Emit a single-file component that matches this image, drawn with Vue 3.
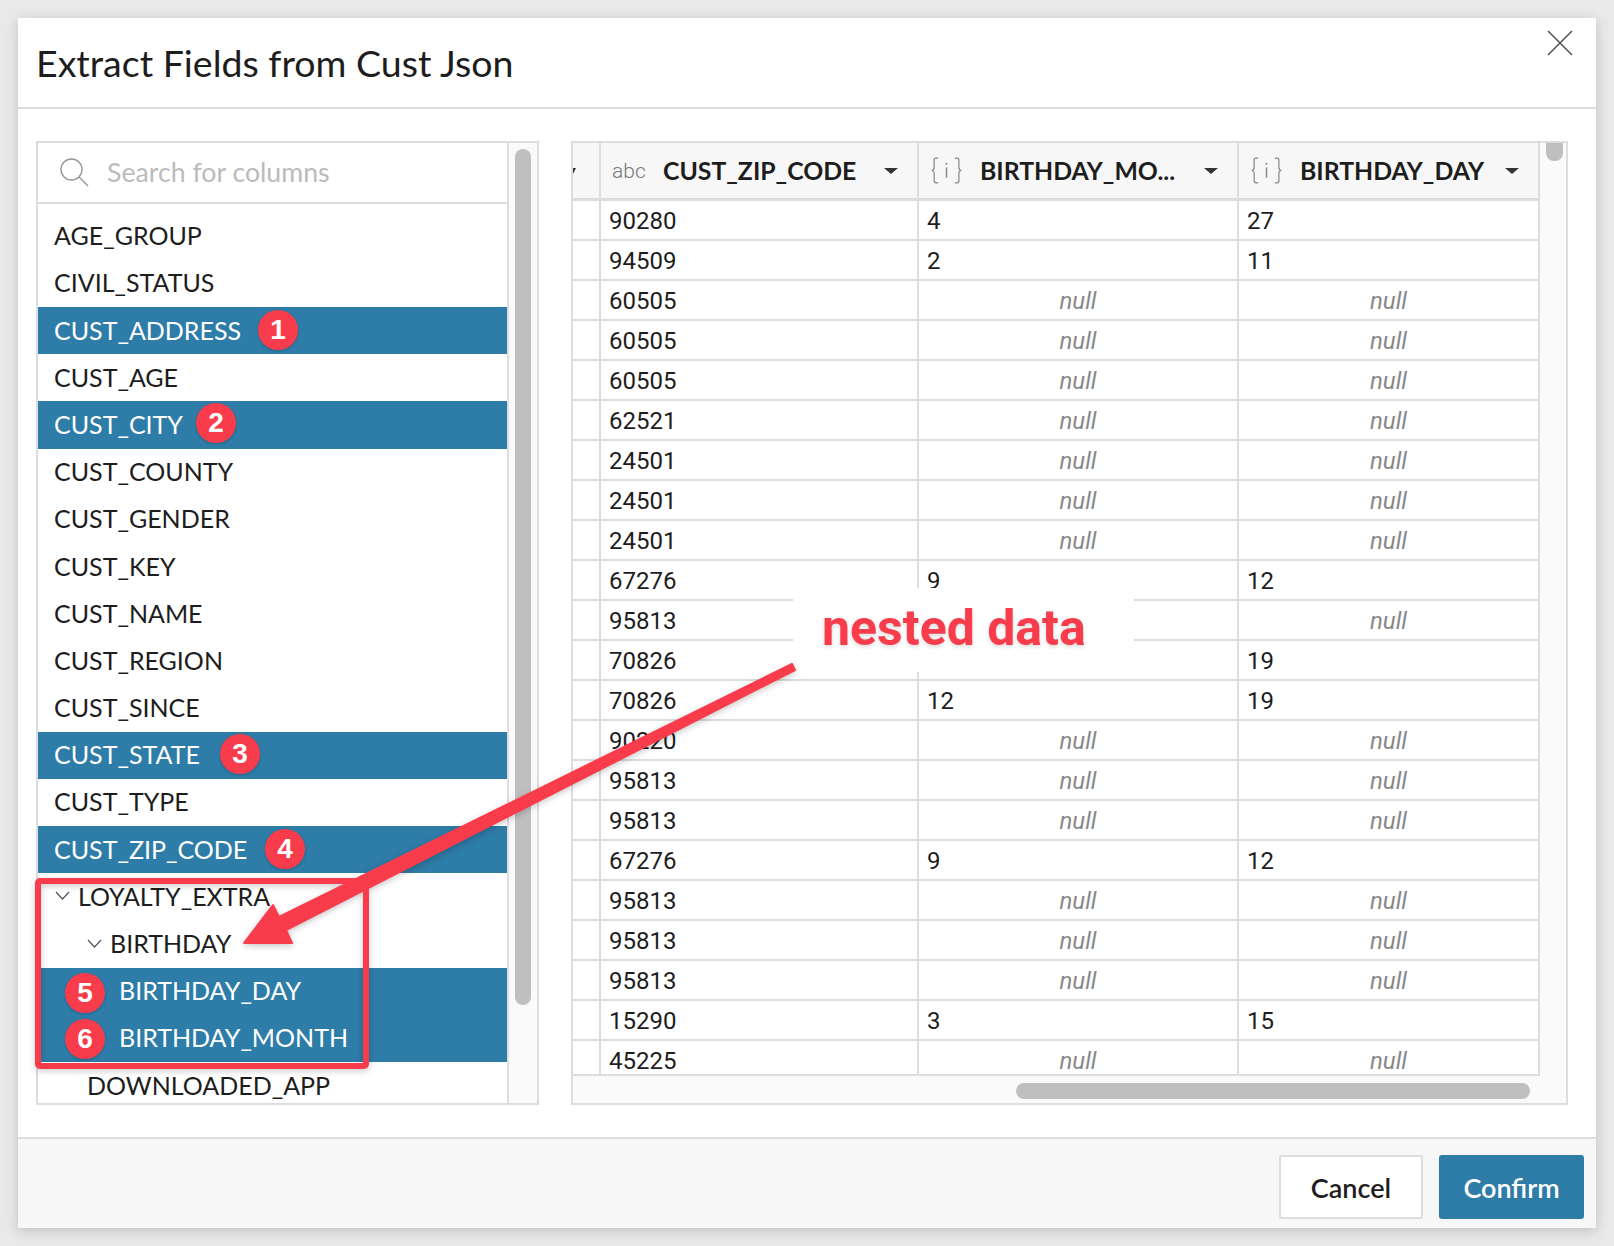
<template>
  <div class="page">
    <section class="dialog">
      <header class="head">
        <h1>Extract Fields from Cust Json</h1>
        <button type="button" class="close" aria-label="Close">
          <svg width="26" height="26" viewBox="0 0 26 26"><path d="M1 1 L25 25 M25 1 L1 25" stroke="#555" stroke-width="1.6" fill="none" /></svg>
        </button>
      </header>

      <div class="body">
        <div class="picker">
          <div class="picker-main">
            <div class="search">
              <svg width="30" height="30" viewBox="0 0 30 30"><circle cx="12.5" cy="12.5" r="10.5" stroke="#999" stroke-width="1.4" fill="none" /><path d="M20 20 L29 29" stroke="#999" stroke-width="1.4" /></svg>
              <span>Search for columns</span>
            </div>
            <ul class="cols">
              <li v-for="c in columns" :key="c.name" :class="['col', 'lvl' + c.level, { sel: c.sel }]">
                <svg v-if="c.open" class="chev" width="15" height="9" viewBox="0 0 15 9"><path d="M1 1 L7.5 8 L14 1" stroke="#555" stroke-width="1.2" fill="none" /></svg>
                {{ c.name }}
              </li>
            </ul>
          </div>
          <div class="vtrack"><div class="vthumb"></div></div>
        </div>

        <div class="preview">
          <div class="preview-top">
            <div class="table">
              <div class="tr th">
                <div class="td stub"><i class="caret small"></i></div>
                <div v-for="h in headers" :key="h.name" class="td">
                  <span v-if="h.type === 'abc'" class="abc">abc</span>
                  <svg v-else class="braces" width="33" height="27" viewBox="0 0 32 26">
                    <path d="M8 1 H6 Q4 1 4 3 V10 Q4 13 1.5 13 Q4 13 4 16 V23 Q4 25 6 25 H8 M24 1 H26 Q28 1 28 3 V10 Q28 13 30.5 13 Q28 13 28 16 V23 Q28 25 26 25 H24" stroke="#888" stroke-width="1.2" fill="none" />
                    <path d="M16 10 V20" stroke="#888" stroke-width="1.4" />
                    <circle cx="16" cy="6.5" r="1" fill="#888" />
                  </svg>
                  <b>{{ h.name }}</b>
                  <i class="caret"></i>
                </div>
              </div>
              <div class="rows">
                <div v-for="(r, i) in rows" :key="i" class="tr">
                  <div class="td stub"></div>
                  <div class="td">{{ r[0] }}</div>
                  <div :class="['td', { nul: r[1] === null }]">{{ r[1] === null ? 'null' : r[1] }}</div>
                  <div :class="['td', { nul: r[2] === null }]">{{ r[2] === null ? 'null' : r[2] }}</div>
                </div>
              </div>
            </div>
            <div class="vtrack narrow"><div class="vthumb short"></div></div>
          </div>
          <div class="htrack"><div class="hthumb"></div></div>
        </div>
      </div>

      <footer class="foot">
        <button type="button" class="btn">Cancel</button>
        <button type="button" class="btn primary">Confirm</button>
      </footer>
    </section>

    <!-- screenshot annotations -->
    <div class="callout">nested data</div>
    <svg class="marks" width="1614" height="1246" viewBox="0 0 1614 1246">
      <rect x="38" y="881" width="328" height="185" rx="2" fill="none" stroke="#f93c4b" stroke-width="6" />
      <path d="M792 664 L795 670 L286 930 L292 943 L244 943 L273 905 L279 917 Z" fill="#f93c4b" stroke="#f93c4b" stroke-width="2" stroke-linejoin="round" />
    </svg>
    <span v-for="b in badges" :key="b.n" class="badge" :style="{ left: b.x + 'px', top: b.y + 'px' }">{{ b.n }}</span>
  </div>
</template>

<script setup>
const names = [
  ['AGE_GROUP'], ['CIVIL_STATUS'], ['CUST_ADDRESS', 1], ['CUST_AGE'], ['CUST_CITY', 1], ['CUST_COUNTY'],
  ['CUST_GENDER'], ['CUST_KEY'], ['CUST_NAME'], ['CUST_REGION'], ['CUST_SINCE'], ['CUST_STATE', 1],
  ['CUST_TYPE'], ['CUST_ZIP_CODE', 1],
]
const columns = [
  ...names.map(([name, sel]) => ({ name, sel: !!sel, level: 0 })),
  { name: 'LOYALTY_EXTRA', level: 1, open: true },
  { name: 'BIRTHDAY', level: 2, open: true },
  { name: 'BIRTHDAY_DAY', level: 3, sel: true },
  { name: 'BIRTHDAY_MONTH', level: 3, sel: true },
  { name: 'DOWNLOADED_APP', level: 4 },
]

const headers = [
  { type: 'abc', name: 'CUST_ZIP_CODE' },
  { type: 'json', name: 'BIRTHDAY_MO...' },
  { type: 'json', name: 'BIRTHDAY_DAY' },
]

// cells under the callout box are left empty
const rows = [
  ['90280', 4, 27], ['94509', 2, 11], ['60505', null, null], ['60505', null, null], ['60505', null, null],
  ['62521', null, null], ['24501', null, null], ['24501', null, null], ['24501', null, null], ['67276', 9, 12],
  ['95813', '', null], ['70826', '', 19], ['70826', 12, 19], ['90220', null, null], ['95813', null, null],
  ['95813', null, null], ['67276', 9, 12], ['95813', null, null], ['95813', null, null], ['95813', null, null],
  ['15290', 3, 15], ['45225', null, null],
]

const badges = [
  { n: 1, x: 278, y: 330 },
  { n: 2, x: 216, y: 423 },
  { n: 3, x: 240, y: 754 },
  { n: 4, x: 285, y: 849 },
  { n: 5, x: 85, y: 993 },
  { n: 6, x: 85, y: 1039 },
]
</script>

<style>
body {
  background: #e9e9e9;
}
</style>

<style scoped>
.page {
  position: relative;
  width: 1614px;
  height: 1246px;
  padding: 18px 18px 0;
  box-sizing: border-box;
  overflow: hidden;
  font-family: "Lato", "Noto Sans", sans-serif;
  color: #1d1d1d;
}

.dialog {
  width: 1578px;
  height: 1210px;
  background: white;
  box-shadow: 0 3px 12px rgba(0, 0, 0, 0.18);
  display: flex;
  flex-direction: column;
}

.head {
  height: 91px;
  flex: none;
  box-sizing: border-box;
  border-bottom: 2px solid #ddd;
  display: flex;
  justify-content: space-between;
  padding: 0 23px 0 18px;
}

h1 {
  margin: 0;
  font-size: 37.5px;
  font-weight: 400;
  line-height: 90px;
}

.close {
  border: 0;
  background: none;
  padding: 0;
  height: 26px;
  margin-top: 12px;
}

.body {
  flex: 1;
  min-height: 0;
  box-sizing: border-box;
  padding: 32px 28px 32px 18px;
  display: flex;
  gap: 32px;
}

.picker {
  width: 503px;
  flex: none;
  box-sizing: border-box;
  border: 2px solid #ddd;
  display: flex;
  overflow: hidden;
}

.picker-main {
  flex: 1;
  min-width: 0;
  overflow: hidden;
}

.search {
  height: 61px;
  box-sizing: border-box;
  border-bottom: 2px solid #ddd;
  display: flex;
  align-items: center;
  gap: 18px;
  padding: 0 0 1px 21px;
  font-size: 26.7px;
  color: #bbb;
}

.cols {
  list-style: none;
  margin: 0;
  padding: 8.6px 0 0;
}

.col {
  height: 47.2px;
  box-sizing: border-box;
  display: flex;
  align-items: center;
  padding-left: 16px;
  padding-bottom: 2px;
  font-size: 25px;
  white-space: nowrap;
}

.col.sel {
  background: #2e7ca8;
  color: white;
}

.lvl1 {
  padding-left: 17px;
}

.lvl2 {
  padding-left: 49px;
}

.lvl3 {
  padding-left: 81px;
}

.lvl4 {
  padding-left: 49px;
}

.chev {
  margin-right: 8px;
}

.vtrack {
  width: 30px;
  flex: none;
  box-sizing: border-box;
  border-left: 2px solid #ddd;
  background: #fafafa;
  padding: 6px 6px 0;
}

.vthumb {
  height: 856px;
  background: #bfbfbf;
  border-radius: 8px;
}

.preview {
  width: 997px;
  flex: none;
  box-sizing: border-box;
  border: 2px solid #ddd;
  display: flex;
  flex-direction: column;
  background: #fafafa;
  overflow: hidden;
}

.preview-top {
  flex: 1;
  min-height: 0;
  display: flex;
}

.table {
  width: 967px;
  flex: none;
  background: white;
  overflow: hidden;
  border-bottom: 2px solid #ddd;
}

.rows {
  height: 875px;
  overflow: hidden;
}

.tr {
  display: grid;
  grid-template-columns: 28px 318px 320px 301px;
  height: 40px;
  box-sizing: border-box;
  border-bottom: 2px solid #ddd;
  font-family: "Roboto", sans-serif;
  font-size: 24px;
}

.td {
  box-sizing: border-box;
  border-right: 2px solid #ddd;
  padding-left: 8px;
  line-height: 40px;
  white-space: nowrap;
}

.stub {
  padding-left: 0;
}

.nul {
  padding-left: 0;
  text-align: center;
  font-style: italic;
  color: #888;
}

.th {
  height: 58px;
  border-bottom-width: 3px;
  background: #f7f7f7;
  font-family: "Lato", "Noto Sans", sans-serif;
}

.th .td {
  display: flex;
  align-items: center;
  padding-left: 11px;
  padding-right: 19px;
}

.th .stub {
  padding: 0;
}

.th b {
  font-weight: 700;
  font-size: 24.8px;
  color: #1d1d1d;
}

.abc {
  width: 51px;
  flex: none;
  font-family: "Roboto", sans-serif;
  font-weight: 300;
  font-size: 21px;
  color: #777;
}

.braces {
  flex: none;
  margin-right: 17px;
}

.caret {
  margin-left: auto;
  width: 0;
  height: 0;
  border-left: 7px solid transparent;
  border-right: 7px solid transparent;
  border-top: 6px solid #333;
}

.caret.small {
  margin-left: -3px;
  border-left-width: 3px;
  border-right-width: 3px;
  border-top-width: 6px;
}

.narrow {
  width: 28px;
  border-left: 0;
  padding: 0 5px 0 6px;
}

.short {
  height: 18px;
  border-radius: 0 0 8px 8px;
}

.htrack {
  height: 27px;
  flex: none;
  box-sizing: border-box;
  padding: 7px 0 0 443px;
}

.hthumb {
  width: 514px;
  height: 16px;
  background: #bfbfbf;
  border-radius: 8px;
}

.foot {
  height: 91px;
  flex: none;
  box-sizing: border-box;
  border-top: 2px solid #ddd;
  background: #f7f7f7;
  display: flex;
  justify-content: flex-end;
  align-items: flex-start;
  gap: 16px;
  padding: 16px 12px 0 0;
}

.btn {
  height: 64px;
  width: 144px;
  box-sizing: border-box;
  border: 2px solid #ddd;
  border-radius: 3px;
  background: white;
  font-family: "Lato", "Noto Sans", sans-serif;
  font-size: 27px;
  font-weight: 600;
  color: #1d1d1d;
}

.primary {
  width: 145px;
  border-color: #2e7ca8;
  background: #2e7ca8;
  color: white;
}

.callout {
  position: absolute;
  left: 793px;
  top: 588px;
  width: 341px;
  height: 84px;
  box-sizing: border-box;
  padding-left: 29px;
  background: white;
  font-family: "Roboto", sans-serif;
  font-weight: 700;
  font-size: 50px;
  line-height: 80px;
  color: #f93c4b;
  text-shadow: 0 2px 4px rgba(0, 0, 0, 0.15);
}

.marks {
  position: absolute;
  left: 0;
  top: 0;
  pointer-events: none;
  filter: drop-shadow(0 2px 3px rgba(0, 0, 0, 0.22));
}

.badge {
  position: absolute;
  width: 40px;
  height: 40px;
  margin: -20px 0 0 -20px;
  border-radius: 50%;
  background: #f93c4b;
  color: white;
  font-family: "Liberation Sans", sans-serif;
  font-weight: 700;
  font-size: 28px;
  line-height: 40px;
  text-align: center;
  box-shadow: 0 1px 3px rgba(0, 0, 0, 0.2);
}
</style>
